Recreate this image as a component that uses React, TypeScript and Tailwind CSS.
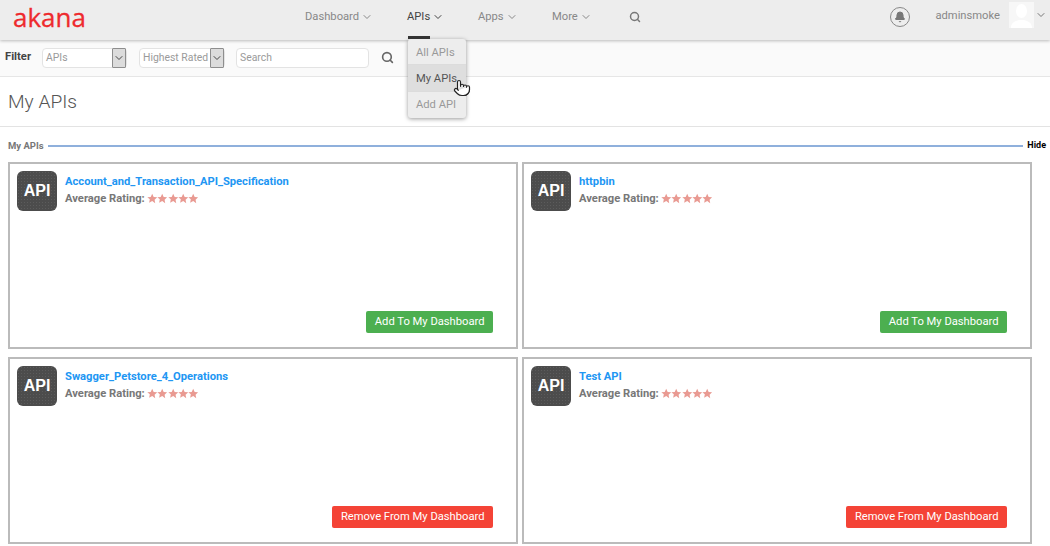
import { Bell, ChevronDown, Pointer, Search } from 'lucide-react';

const NAV_ITEMS = [
  { label: 'Dashboard', width: 'w-[102px]' },
  { label: 'APIs', width: 'w-[71px]', active: true },
  { label: 'Apps', width: 'w-[74px]' },
  { label: 'More', width: 'w-[78px]' },
];

const APIS = [
  { name: 'Account_and_Transaction_API_Specification', added: false },
  { name: 'httpbin', added: false },
  { name: 'Swagger_Petstore_4_Operations', added: true },
  { name: 'Test API', added: true },
];

function Star() {
  return (
    <svg viewBox="0 0 24 24" className="h-[11px] w-[10.4px] fill-[#e99a92]">
      <path d="M12 1l3.4 7.3 7.9 1-5.8 5.5 1.5 7.9L12 18l-7 3.7 1.5-7.9L.7 9.3l7.9-1z" />
    </svg>
  );
}

function Select({ label, width }: { label: string; width: string }) {
  return (
    <div className={`flex h-5 items-center justify-between rounded-sm border border-[#e3e3e3] bg-white pl-[3px] text-[10.4px] whitespace-nowrap text-[#9a9a9a] ${width}`}>
      <span className="pt-[1px]">{label}</span>
      <span className="flex h-5 w-[14px] items-center justify-center rounded-[1px] border border-[#8e8e8e] bg-[#dcdcdc]">
        <ChevronDown className="h-3 w-3 text-[#444]" strokeWidth={2} />
      </span>
    </div>
  );
}

function ApiCard({ name, added }: { name: string; added: boolean }) {
  return (
    <div className="flex h-[187px] flex-col border-2 border-[#bbbbbb] bg-white pt-[7px] pr-[23px] pb-[14px] pl-[7px]">
      <div className="flex gap-2">
        <div className="flex h-10 w-10 items-center justify-center rounded-md bg-[#4c4c4c] bg-[radial-gradient(#5c5c5c_1px,transparent_1px)] bg-[length:3px_3px] font-['Liberation_Sans',sans-serif] text-[16px] font-bold text-white">
          API
        </div>
        <div className="pt-[2px]">
          <div className="text-[11.2px] leading-[17px] font-bold text-[#2196f3]">{name}</div>
          <div className="flex items-center gap-[2px] text-[11.2px] leading-[17px] font-bold text-[#777]">
            Average Rating:
            <span className="flex">
              <Star />
              <Star />
              <Star />
              <Star />
              <Star />
            </span>
          </div>
        </div>
      </div>
      <div className="mt-auto flex justify-end">
        <button
          type="button"
          className={`h-[22px] rounded-[2px] px-[8.5px] text-[11.2px] text-white ${added ? 'bg-[#f44336]' : 'bg-[#4caf50]'}`}
        >
          {added ? 'Remove From My Dashboard' : 'Add To My Dashboard'}
        </button>
      </div>
    </div>
  );
}

export default function App() {
  return (
    <div className="relative h-[546px] w-[1050px] overflow-hidden bg-white font-['Roboto',sans-serif]">
      <header className="relative z-10 flex h-10 items-center bg-[#ededed] shadow-[0_1px_3px_rgba(0,0,0,0.25)]">
        <div className="w-[305px] pb-[6px] pl-[13px] font-['Open_Sans',sans-serif] text-[26px] leading-none text-[#ee2a2e] [-webkit-text-stroke:0.3px_#ee2a2e]">
          akana
        </div>
        <nav className="flex items-center">
          {NAV_ITEMS.map((item) => (
            <div
              key={item.label}
              className={`flex items-center gap-[2px] pb-[6px] text-[11.2px] ${item.width} ${item.active ? 'text-[#444]' : 'text-[#888]'}`}
            >
              {item.label}
              <ChevronDown className="h-3 w-3" strokeWidth={2} />
            </div>
          ))}
          <Search className="mb-[6px] -ml-[1px] h-3 w-3 text-[#777]" strokeWidth={3} />
        </nav>
        <div className="ml-auto flex items-center pr-[3px]">
          <span className="mr-[25px] mb-[6px] flex h-5 w-5 items-center justify-center rounded-full border border-[#888]">
            <Bell className="h-3 w-3 fill-[#777] text-[#777]" />
          </span>
          <span className="mr-[9px] mb-[8px] text-[11.2px] text-[#888]">adminsmoke</span>
          <span className="mb-[10px] flex h-[26px] w-[25px] items-end justify-center overflow-hidden bg-[#f7f7f7]">
            <svg viewBox="0 0 25 26" className="h-[26px] w-[25px] fill-white">
              <ellipse cx="12.5" cy="9" rx="5.5" ry="7" />
              <path d="M2 26c0-6 5-7 8-8h5c3 1 8 2 8 8z" />
            </svg>
          </span>
          <ChevronDown className="mb-[10px] ml-[1px] h-3 w-3 text-[#777]" strokeWidth={2} />
        </div>
      </header>

      {/* APIs menu, opened over the filter bar */}
      <div className="absolute top-[39px] left-[408px] z-20 w-[58px] rounded-[3px] bg-[#ededed] text-[11.2px] text-[#999] shadow-[0_1px_4px_rgba(0,0,0,0.4)]">
        <div className="absolute -top-[3px] left-0 h-[3px] w-[22px] bg-[#333]" />
        <div className="flex h-[26px] items-center border-b border-[#dcdcdc] pt-[3px] pl-2">All APIs</div>
        <div className="flex h-[27px] items-center border-b border-[#dcdcdc] bg-[#dedede] pt-[2px] pl-2 text-[#555]">My APIs</div>
        <div className="flex h-[26px] items-center pl-2">Add API</div>
      </div>
      <Pointer className="absolute top-[78px] left-[453px] z-30 h-5 w-[18px] fill-white text-[#222]" strokeWidth={1.6} />

      <div className="flex h-[37px] items-center border-b border-[#e6e6e6] bg-[#fafafa] pb-[1px] pl-[5px]">
        <span className="mr-[10px] w-[27px] text-[11.2px] font-bold text-[#444]">Filter</span>
        <Select label="APIs" width="w-[85px]" />
        <span className="w-3" />
        <Select label="Highest Rated" width="w-[86px]" />
        <span className="w-[11px]" />
        <div className="flex h-5 w-[133px] items-center rounded-sm border border-[#e3e3e3] bg-white pt-[1px] pl-[3px] text-[10.4px] text-[#9a9a9a]">
          Search
        </div>
        <Search className="ml-[12px] h-[13px] w-[13px] text-[#666]" strokeWidth={3} />
      </div>

      <div className="flex h-[50px] items-center border-b border-[#e3e3e3] pt-[1px] pl-2 text-[19.2px] font-light text-[#555]">
        My APIs
      </div>

      <div className="flex h-[35px] items-center pt-[3px] pr-[4px] pl-2">
        <span className="text-[9.5px] font-bold text-[#777]">My APIs</span>
        <span className="mx-1 h-[2px] flex-1 bg-[#8fb0dc]" />
        <span className="text-[9px] font-bold text-black">Hide</span>
      </div>

      <div className="grid w-[1032px] grid-cols-2 gap-x-1 gap-y-2 pl-2">
        {APIS.map((api) => (
          <ApiCard key={api.name} name={api.name} added={api.added} />
        ))}
      </div>
    </div>
  );
}
